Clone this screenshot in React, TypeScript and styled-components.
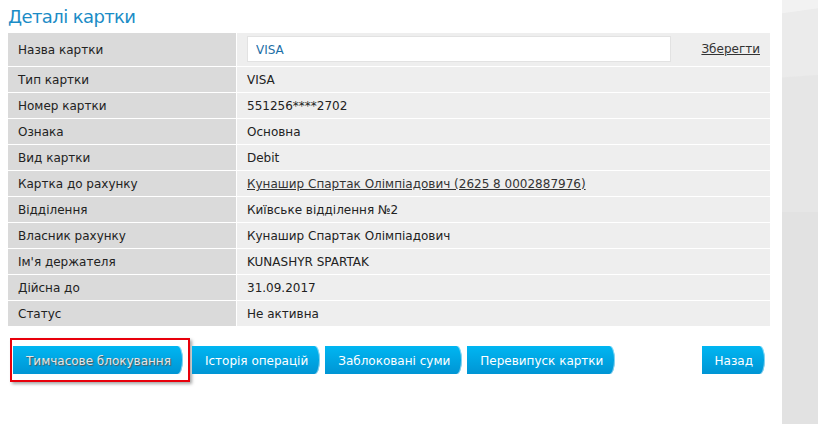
import React from "react";
import styled, { createGlobalStyle } from "styled-components";

const GlobalStyle = createGlobalStyle`
  html, body {
    margin: 0;
    padding: 0;
    background: #fff;
  }
  body {
    font-family: "DejaVu Sans", Verdana, sans-serif;
    font-size: 12px;
    color: #222;
  }
`;

const Page = styled.div`
  display: flex;
  width: 818px;
  height: 424px;
  overflow: hidden;
`;

const Main = styled.div`
  flex: 1;
  padding: 0 12px 0 8px;
`;

const Side = styled.div`
  width: 36px;
  background:
    linear-gradient(172deg, #f2f2f2 0 3%, transparent 3.2%),
    linear-gradient(176deg, #ebebeb 0 18%, transparent 18.3%),
    linear-gradient(180deg, #e6e6e6 0 50%, #e2e2e2 50% 100%);
`;

const Title = styled.h1`
  margin: 0;
  padding-top: 5px;
  height: 28px;
  font-size: 18px;
  letter-spacing: -0.6px;
  font-weight: normal;
  color: #1b8cc6;
  line-height: 24px;
`;

const Table = styled.table`
  width: 100%;
  border-collapse: collapse;
`;

const Row = styled.tr<{ $tall?: boolean }>`
  height: ${(p) => (p.$tall ? 33 : 26)}px;
`;

const Label = styled.td`
  width: 218px;
  padding: 2px 0 0 10px;
  background: #dadada;
  border-bottom: 1px solid #fff;
  border-right: 1px solid #fff;
`;

const Value = styled.td`
  padding: 2px 10px 0;
  background: #eeeeee;
  border-bottom: 1px solid #fff;
`;

const EditLine = styled.div`
  display: flex;
  align-items: center;
  justify-content: space-between;
  margin-top: -2px;
`;

const NameInput = styled.input`
  width: 424px;
  height: 26px;
  box-sizing: border-box;
  border: 1px solid #e2e2e2;
  background: #fff;
  padding: 2px 8px 0;
  font: inherit;
  color: #1d6ea6;
  outline: none;
`;

const Link = styled.a`
  color: #333;
  text-decoration: underline;
  cursor: pointer;
`;

const Buttons = styled.div`
  display: flex;
  align-items: center;
  margin-top: 11px;
  padding-left: 2px;
`;

const Frame = styled.div`
  border: 2px solid #e8000b;
  padding: 6px 0 6px 1px;
  margin-right: 2px;
  box-shadow: 2px 2px 3px rgba(0, 0, 0, 0.35);
`;

const Button = styled.button<{ $active?: boolean; $push?: boolean }>`
  height: 28px;
  padding: 2px 12px 0 13px;
  margin-right: 5px;
  margin-left: ${(p) => (p.$push ? "auto" : "0")};
  border: none;
  border-radius: 0 5px 5px 0 / 0 14px 14px 0;
  background: linear-gradient(#00b6f2, #0095d4);
  box-shadow: inset -1px 0 0 rgba(255, 255, 255, 0.5);
  font: inherit;
  font-size: 12px;
  white-space: nowrap;
  color: ${(p) => (p.$active ? "#e6e6e6" : "#fff")};
  text-shadow: ${(p) => (p.$active ? "1px 1px 1px #555" : "none")};
  cursor: pointer;
`;

const rows: [string, React.ReactNode][] = [
  ["Тип картки", "VISA"],
  ["Номер картки", "551256****2702"],
  ["Ознака", "Основна"],
  ["Вид картки", "Debit"],
  ["Картка до рахунку", <Link key="l">Кунашир Спартак Олімпіадович (2625 8 0002887976)</Link>],
  ["Відділення", "Київське відділення №2"],
  ["Власник рахунку", "Кунашир Спартак Олімпіадович"],
  ["Ім'я держателя", "KUNASHYR SPARTAK"],
  ["Дійсна до", "31.09.2017"],
  ["Статус", "Не активна"],
];

export default function App() {
  return (
    <Page>
      <GlobalStyle />
      <Main>
        <Title>Деталі картки</Title>
        <Table>
          <tbody>
            <Row $tall>
              <Label>Назва картки</Label>
              <Value>
                <EditLine>
                  <NameInput defaultValue="VISA" />
                  <Link>Зберегти</Link>
                </EditLine>
              </Value>
            </Row>
            {rows.map(([k, v], i) => (
              <Row key={i}>
                <Label>{k}</Label>
                <Value>{v}</Value>
              </Row>
            ))}
          </tbody>
        </Table>
        <Buttons>
          <Frame>
            <Button $active>Тимчасове блокування</Button>
          </Frame>
          <Button>Історія операцій</Button>
          <Button>Заблоковані суми</Button>
          <Button>Перевипуск картки</Button>
          <Button $push>Назад</Button>
        </Buttons>
      </Main>
      <Side />
    </Page>
  );
}
